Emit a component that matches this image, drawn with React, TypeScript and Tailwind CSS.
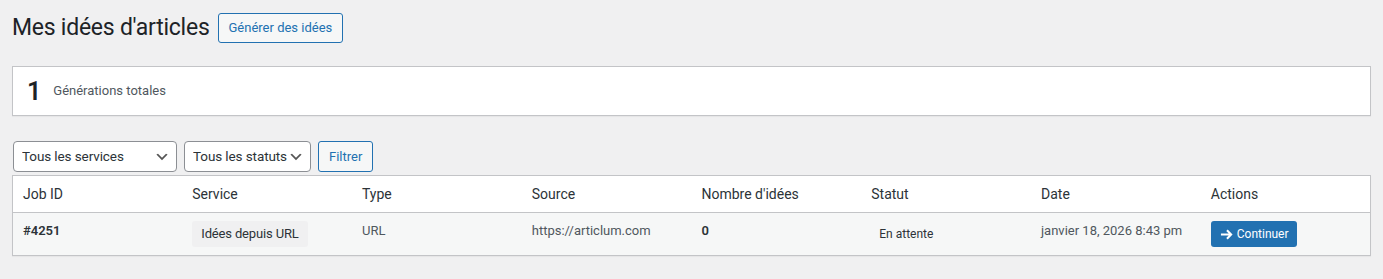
const columns = [
  "Job ID",
  "Service",
  "Type",
  "Source",
  "Nombre d'idées",
  "Statut",
  "Date",
  "Actions",
];

function Select({ label, width }: { label: string; width: string }) {
  return (
    <div className={`relative ${width}`}>
      <select className="w-full h-[31px] appearance-none rounded-[4px] border border-[#8c8f94] bg-white pl-[8px] pr-[22px] text-[13.5px] tracking-[-0.1px] text-[#2c3338] outline-none">
        <option>{label}</option>
      </select>
      <svg
        viewBox="0 0 20 20"
        className="pointer-events-none absolute right-[7px] top-[8px] h-4 w-4"
        fill="#555"
      >
        <path d="M5 6l5 5 5-5 2 1-7 7-7-7 2-1z" />
      </svg>
    </div>
  );
}

export default function App() {
  return (
    <div
      className="min-h-screen bg-[#f0f0f1] px-3 pt-[13px] text-[13px] text-[#3c434a]"
      style={{ fontFamily: '"Segoe UI", Roboto, "Noto Sans", sans-serif' }}
    >
      <div className="flex items-center gap-[8px]">
        <h1 className="text-[23px] font-normal leading-[30px] tracking-[-0.25px] text-[#1d2327]">
          Mes idées d'articles
        </h1>
        <button className="h-[30px] rounded-[3px] border border-[#2271b1] bg-[#f6f7f7] px-[10px] text-[13px] text-[#2271b1]">
          Générer des idées
        </button>
      </div>

      <div className="mt-[23px] flex h-[50px] items-center gap-[12px] border border-[#c3c4c7] bg-white pl-[14px] shadow-[0_1px_1px_rgba(0,0,0,0.04)]">
        <span className="text-[25px] font-semibold leading-none text-[#1d2327]">1</span>
        <span className="text-[13px] text-[#50575e]">Générations totales</span>
      </div>

      <div className="mt-[25px] flex items-center gap-[7px] pl-px">
        <Select label="Tous les services" width="w-[164px]" />
        <Select label="Tous les statuts" width="w-[127px]" />
        <button className="h-[31px] rounded-[3px] border border-[#2271b1] bg-[#f6f7f7] px-[10px] text-[13px] text-[#2271b1]">
          Filtrer
        </button>
      </div>

      <table className="mt-[3px] w-full table-fixed border-collapse border border-[#c3c4c7] bg-white shadow-[0_1px_1px_rgba(0,0,0,0.04)]">
        <thead>
          <tr className="border-b border-[#c3c4c7]">
            {columns.map((c) => (
              <th
                key={c}
                className="px-[10px] py-[8px] text-left text-[14px] font-normal leading-[20px] text-[#2c3338]"
              >
                {c}
              </th>
            ))}
          </tr>
        </thead>
        <tbody>
          <tr className="bg-[#f6f7f7] align-top">
            <td className="px-[10px] py-[8px] leading-[20px]">
              <strong className="font-semibold text-[#2c3338]">#4251</strong>
            </td>
            <td className="px-[10px] py-[8px] leading-[20px]">
              <span className="inline-block rounded-[3px] bg-[#f0f0f1] px-[9px] py-[3px] tracking-[-0.15px] text-[#2c3338]">
                Idées depuis URL
              </span>
            </td>
            <td className="px-[10px] py-[8px] leading-[20px] text-[#50575e]">URL</td>
            <td className="px-[10px] py-[8px] leading-[20px] text-[#50575e]">https://articlum.com</td>
            <td className="px-[10px] py-[8px] leading-[20px]">
              <strong className="font-semibold text-[#2c3338]">0</strong>
            </td>
            <td className="px-[10px] py-[8px] leading-[20px]">
              <span className="inline-block px-[8px] py-[4px] text-[12px] leading-[18px] text-[#2c3338]">
                En attente
              </span>
            </td>
            <td className="px-[10px] py-[8px] leading-[20px] text-[#50575e]">
              janvier 18, 2026 8:43 pm
            </td>
            <td className="px-[10px] py-[8px] leading-[20px]">
              <button className="flex h-[26px] items-center gap-[4px] rounded-[3px] bg-[#2271b1] pl-[9px] pr-[8px] text-[12px] text-white">
                <svg
                  viewBox="0 0 14 14"
                  className="h-[13px] w-[13px]"
                  fill="none"
                  stroke="white"
                  strokeWidth="2.2"
                >
                  <path d="M1 7h11M7.5 2.5L12 7l-4.5 4.5" />
                </svg>
                Continuer
              </button>
            </td>
          </tr>
        </tbody>
      </table>
    </div>
  );
}
